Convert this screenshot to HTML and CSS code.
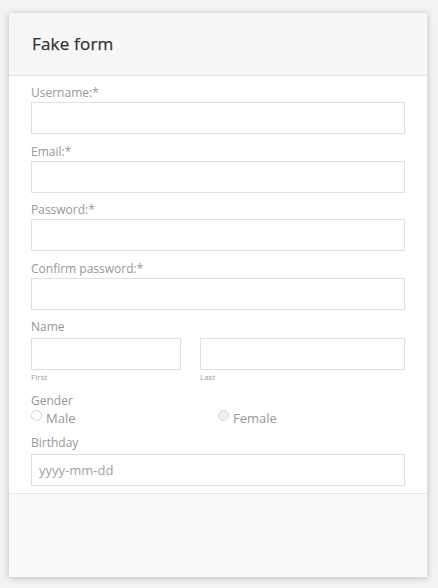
FILE: index.html
```html
<!DOCTYPE html>
<html lang="en">
<head>
<meta charset="utf-8">
<title>Fake form</title>
<link rel="stylesheet" href="styles.css">
</head>
<body>
<div class="card">
  <div class="card-header">
    <h1 class="title">Fake form</h1>
  </div>
  <form class="card-body">
    <div class="field">
      <label class="label">Username:*</label>
      <input class="input" type="text">
    </div>
    <div class="field">
      <label class="label">Email:*</label>
      <input class="input" type="text">
    </div>
    <div class="field">
      <label class="label">Password:*</label>
      <input class="input" type="password">
    </div>
    <div class="field">
      <label class="label">Confirm password:*</label>
      <input class="input" type="password">
    </div>
    <div class="field field-name">
      <label class="label">Name</label>
      <div class="name-row">
        <div class="name-col">
          <input class="input" type="text">
          <span class="sublabel">First</span>
        </div>
        <div class="name-col">
          <input class="input" type="text">
          <span class="sublabel">Last</span>
        </div>
      </div>
    </div>
    <div class="field field-gender">
      <span class="label label-gender">Gender</span>
      <div class="radio-row">
        <label class="radio"><span class="radio-dot"></span>Male</label>
        <label class="radio"><span class="radio-dot radio-dot-alt"></span>Female</label>
      </div>
    </div>
    <div class="field field-birthday">
      <label class="label">Birthday</label>
      <input class="input" type="text" placeholder="yyyy-mm-dd">
    </div>
  </form>
  <div class="card-footer"></div>
</div>
</body>
</html>
```
FILE: styles.css
```css
* { box-sizing: border-box; }
html, body { margin: 0; padding: 0; }
body {
  background: #f3f3f3;
  font-family: "Open Sans", "DejaVu Sans", sans-serif;
  padding: 13px 11px 11px 9px;
}
.card {
  width: 418px;
  height: 564px;
  background: #fff;
  box-shadow: 0 1px 7px rgba(0,0,0,0.22);
  display: flex;
  flex-direction: column;
}
.card-header {
  height: 63px;
  background: #f7f7f7;
  border-bottom: 1px solid #e3e3e3;
  padding: 0 23px;
  display: flex;
  align-items: center;
}
.title {
  margin: 0 0 2px 0;
  font-size: 17px;
  font-weight: 400;
  color: #333;
  letter-spacing: 0.2px;
  -webkit-text-stroke: 0.25px #333;
}
.card-body {
  margin: 0;
  padding: 8px 22px 7px 22px;
  display: flex;
  flex-direction: column;
}
.field {
  display: flex;
  flex-direction: column;
  margin-bottom: 8.5px;
}
.label {
  font-size: 12px;
  line-height: 17px;
  color: #979797;
  margin-bottom: 1px;
}
.input {
  display: block;
  width: 100%;
  height: 32px;
  border: 1.5px solid #e0e0e0;
  background: #fff;
  font-family: inherit;
  font-size: 13px;
  color: #555;
  padding: 0 7px;
  margin: 0;
  outline: none;
}
.input::placeholder { color: #a3a3a3; }
.field-name .label { margin-bottom: 3px; }
.field-name { margin-bottom: 10px; }
.name-row {
  display: grid;
  grid-template-columns: 150px 205px;
  column-gap: 19px;
}
.name-col { display: flex; flex-direction: column; }
.sublabel {
  font-size: 8px;
  line-height: 12px;
  margin-top: 1px;
  color: #9c9c9c;
}
.field-gender { margin-bottom: 7px; }
.label-gender { line-height: 15px; margin-bottom: 0; }
.radio-row {
  display: grid;
  grid-template-columns: 1fr 1fr;
  margin-top: 2px;
}
.radio {
  display: flex;
  align-items: center;
  font-size: 13px;
  line-height: 17px;
  color: #979797;
}
.radio-dot {
  width: 11px;
  height: 11px;
  border-radius: 50%;
  border: 1px solid #d2d2d2;
  background: #fff;
  margin-right: 4px;
  position: relative;
  top: -3px;
}
.radio-dot-alt { background: #f0f0f0; border-color: #d8d8d8; }
.field-birthday { margin-bottom: 0; }
.field-birthday .label { margin-bottom: 3px; }
.card-footer {
  flex: 1;
  background: #fafafa;
  border-top: 1px solid #e6e6e6;
}
```
